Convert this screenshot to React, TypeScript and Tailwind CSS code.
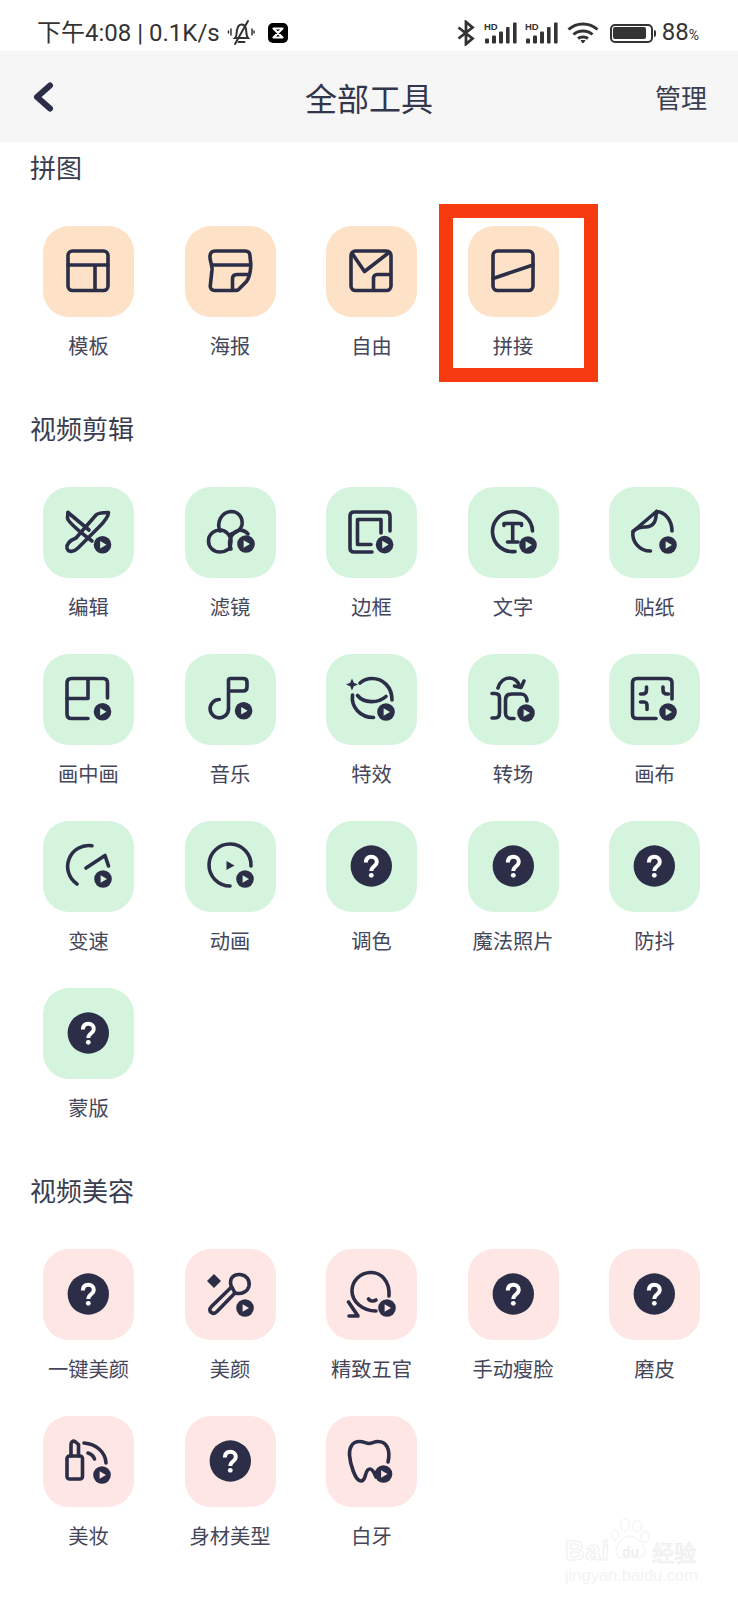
import React from "react";

const D = "#2c2e48";
const cjk = "font-['Noto_Sans_CJK_SC',sans-serif]";

function Play({ cx, cy, bg }: { cx: number; cy: number; bg: string }) {
  return (
    <g stroke="none">
      <circle cx={cx} cy={cy} r={8.8} fill={D} />
      <path d={`M${cx - 2.4} ${cy - 3.8} L${cx + 4} ${cy} L${cx - 2.4} ${cy + 3.8} Z`} fill={bg} />
    </g>
  );
}

type IconFn = (bg: string) => React.ReactNode;

const icons: Record<string, IconFn> = {
  template: () => (
    <>
      <rect x="25" y="25" width="40" height="39.500" rx="4.500" />
      <path d="M25 39H65M52 39V64" />
    </>
  ),
  poster: () => (
    <>
      <path d="M47 64.500H30C26.500 64.500 25 62.500 25.300 59.500L27 44C27.500 38 24.500 35 25 30C25.300 26.500 27 25 30 25H60C63 25 65 26.500 65 30C65 34 66.500 37 65.500 43C65 48 64 52 61.500 55.500L53 64C51.500 64.500 49 64.500 47 64.500" />
      <path d="M26.500 39H65" />
      <path d="M47.500 64V53C47.500 50 49 48.500 52 48.500H63" />
    </>
  ),
  free: () => (
    <>
      <rect x="25" y="25" width="40" height="39.500" rx="4.500" />
      <path d="M26.500 28L38.500 45.500L63 26.500" />
      <path d="M47.500 64V52C47.500 50 49 48.500 51 48.500H64.500" />
    </>
  ),
  splice: () => (
    <>
      <rect x="25" y="25" width="40" height="39.500" rx="4.500" />
      <path d="M25 52.500L65 39" />
    </>
  ),
  edit: (bg) => (
    <>
      <path d="M25 25.500L24.500 31C25 35 37 45 49 54" />
      <path d="M25 25.500L46 43" />
      <path d="M65.500 25.500C65.500 30 60 36 56 40L35 61C31 65 25 66 24 61C23.500 56 28 53 33 51L53 28C55 26 60 25.500 65.500 25.500" />
      <Play cx={59.500} cy={57.700} bg={bg} />
    </>
  ),
  filter: (bg) => (
    <>
      <path d="M35 44C31.500 36 36 25 46 24.500C54 24.500 58 31 57 38C56 42 52 46 46 47" />
      <path d="M36 43.500C30 42 23.500 47 23.500 54C23.500 60 28 65 35 65C38 65 41 64 44 62" />
      <path d="M35 43C41 43 46 49 46 54C46 58 45 60 44 62" />
      <path d="M46 62C43 56 45 49 50 45C54 42 60 43 63 47" />
      <Play cx={61} cy={57} bg={bg} />
    </>
  ),
  frame: (bg) => (
    <>
      <path d="M64 44V29C64 26.500 62.500 25 60 25H28C25.500 25 24 26.500 24 29V61C24 63.500 25.500 65 28 65H46" />
      <path d="M55 46V32.500H31.500V57.500H45" />
      <Play cx={58.600} cy={57.600} bg={bg} />
    </>
  ),
  text: (bg) => (
    <>
      <path d="M64.500 44A20 20 0 1 0 47 64.500" />
      <path d="M36 38.500V36.500H53.500V38.500M44.700 36.500V55M39.500 55H50" />
      <Play cx={60} cy={58} bg={bg} />
    </>
  ),
  sticker: (bg) => (
    <>
      <path d="M47.500 24.500C56 25 63 33 63 44" />
      <path d="M47.500 24.500L24 44.500C22.500 54 30 64 41.500 64" />
      <path d="M47.500 24.500C47 33 46 40 36 40C31 40 27.500 41 24 44.500" />
      <Play cx={59} cy={58} bg={bg} />
    </>
  ),
  pip: (bg) => (
    <>
      <path d="M64.500 44V29C64.500 26 63 24.500 60 24.500H28.500C25.500 24.500 24 26 24 29V60C24 63 25.500 64.500 28.500 64.500H45" />
      <path d="M24 44.500H45V24.500" />
      <Play cx={59.500} cy={57.700} bg={bg} />
    </>
  ),
  music: (bg) => (
    <>
      <path d="M43.500 55V26A2 2 0 0 1 45.500 24.500H58C60.500 24.500 62 26 62 28V33C62 35.500 60.500 37 58 37H43.500" />
      <path d="M43.500 55A9.200 9.200 0 1 1 34.300 45.500" />
      <Play cx={58.600} cy={56.700} bg={bg} />
    </>
  ),
  effect: (bg) => (
    <>
      <path d="M34 29C38 25.500 42 24.500 46 24.500C57 24.500 66 33 66 46" />
      <path d="M26.500 41C25 53 34 63.500 47.500 63.500" />
      <path d="M31.500 41.500C38 49.500 52 49.500 60 42.500" />
      <path d="M26 24.500L27.800 28.700L32 30.500L27.800 32.300L26 36.500L24.200 32.300L20 30.500L24.200 28.700Z" fill={D} stroke="none" />
      <Play cx={60} cy={58} bg={bg} />
    </>
  ),
  transition: (bg) => (
    <>
      <path d="M30 34C32 27 37 24 41.500 24C47 24 50 27 52 33" />
      <path d="M56 27L53 33.500L46.500 32" />
      <path d="M24 39.500H27C30 39.500 31.500 41 31.500 44V59C31.500 62 30 64 27 64H24" />
      <path d="M59 47C59 43 57 40 53 40H44C40 40 37.500 42 37.500 46V59C37.500 62 39.500 64.500 43 64.500H46" />
      <Play cx={58} cy={59} bg={bg} />
    </>
  ),
  canvas: (bg) => (
    <>
      <path d="M63 45V29C63 26 61.500 24.500 58.500 24.500H28C25 24.500 23.500 26 23.500 29V60C23.500 63 25 64.500 28 64.500H47" />
      <path d="M37.500 33V36C37.500 38.500 36 40 33.500 40H31.500M54 33V36C54 38.500 55.500 40 58 40H59.500M31.500 48H35C37 48 38 49.500 38 51V55.500" />
      <Play cx={59} cy={58} bg={bg} />
    </>
  ),
  speed: (bg) => (
    <>
      <path d="M49 24.800A21 21 0 0 0 34 63" />
      <path d="M43 47L62 34.500L65.500 45" />
      <Play cx={60} cy={58} bg={bg} />
    </>
  ),
  anim: (bg) => (
    <>
      <path d="M66 45A21 21 0 1 0 45 65" />
      <path d="M41.500 40L49.500 44.500L41.500 49Z" fill={D} stroke="none" />
      <Play cx={60} cy={58} bg={bg} />
    </>
  ),
  q: () => (
    <>
      <circle cx="45.300" cy="45" r="20.700" fill={D} stroke="none" />
      <path d="M39.800 41.500C40 37.500 42.300 35.800 45.300 35.800C48.500 35.800 50.800 38 50.800 41C50.800 45.500 45.300 45 45.300 50" stroke="#ffffff" strokeWidth="4" strokeLinecap="butt" />
      <circle cx="45.300" cy="54.300" r="2.400" fill="#ffffff" stroke="none" />
    </>
  ),
  beauty: (bg) => (
    <>
      <path d="M29 25L36 32L29 39L22 32Z" fill={D} stroke="none" />
      <path d="M46 36.500C44 29 49 25 55 25.500C61.500 26 65 31 64 37C63 42 57 46 50 44Z" />
      <path d="M46.500 38L26.500 57.500C24 60 24.500 62.500 26.500 63.500C28.500 65 30.500 64 32 62.500L50 44" />
      <Play cx={60} cy={59} bg={bg} />
    </>
  ),
  face: (bg) => (
    <>
      <path d="M63 47C64 32 55 23.500 45 23.500C34 23.500 26 32 26 42C26 52 36 62 50 62" />
      <path d="M22.500 53L32 67H23" />
      <path d="M42.500 50C44 52.500 48 52.500 50 51" />
      <Play cx={61} cy={59} bg={bg} />
    </>
  ),
  lipstick: (bg) => (
    <>
      <rect x="24" y="40" width="15.500" height="23" rx="2.500" />
      <path d="M28 40V28.500C28 26 30 24.500 32 25.500L35.500 28.500V40" />
      <path d="M41 27C53 28 62.500 36 63 47" />
      <path d="M45 37C48 38 50.500 40 51.500 43" />
      <Play cx={59} cy={59} bg={bg} />
    </>
  ),
  tooth: (bg) => (
    <>
      <path d="M62 46C65 33 60 25.500 52 25.500C48 25.500 46 27.500 43 27.500C40 27.500 38 25.500 33.500 25.500C26 25.500 23 32 23.500 39C24 47 29 65 35 65C41 65 38 53 44 53C47 53 48 57 50 61" />
      <Play cx={57.500} cy={58} bg={bg} />
    </>
  ),
};

function Tile({ icon, label, bg }: { icon: string; label: string; bg: string }) {
  return (
    <div className="flex flex-col items-center w-[91px]">
      <div className="w-[91px] h-[91px] rounded-[26px]" style={{ backgroundColor: bg }}>
        <svg viewBox="0 0 91 91" width="91" height="91" fill="none" stroke={D} strokeWidth="3.600" strokeLinecap="round" strokeLinejoin="round">
          {icons[icon](bg)}
        </svg>
      </div>
      <div className="mt-[15px] h-[28px] leading-[28px] text-[20.250px] text-[#44465a] whitespace-nowrap">{label}</div>
    </div>
  );
}

function Section({ title, bg, items, className }: { title: string; bg: string; items: [string, string][]; className?: string }) {
  return (
    <section className={className}>
      <h2 className="pl-[30px] h-[36px] leading-[33px] text-[26px] font-normal text-[#3a3c50]">{title}</h2>
      <div className="mt-[40px] pl-[43px] grid grid-cols-[repeat(5,91px)] gap-x-[50.500px] gap-y-[33px]">
        {items.map(([icon, label]) => (
          <Tile key={label} icon={icon} label={label} bg={bg} />
        ))}
      </div>
    </section>
  );
}

function Signal() {
  return (
    <svg width="33" height="22" viewBox="0 0 33 22" fill="#333">
      <text x="0" y="8" fontSize="9.500" fontWeight="700" fontFamily="Liberation Sans, sans-serif">HD</text>
      <rect x="1" y="16.500" width="4" height="5" rx="1" />
      <rect x="8" y="13.500" width="4" height="8" rx="1" />
      <rect x="15" y="9.500" width="4" height="12" rx="1" />
      <rect x="22" y="5" width="3.600" height="16.500" rx="1" />
      <rect x="29" y="0.500" width="3.600" height="21" rx="1" />
    </svg>
  );
}

function StatusBar() {
  return (
    <div className="h-[51px] bg-white relative flex items-center pl-[37px] pr-[39px] pt-[15px] text-[#333333] font-['Roboto','Noto_Sans_CJK_SC',sans-serif]">
      <span className="text-[24px] leading-[30px] whitespace-nowrap">下午4:08 | 0.1K/s</span>
      <svg className="ml-[7px]" width="28" height="28" viewBox="0 0 28 28" fill="none" stroke="#333" strokeWidth="2" strokeLinecap="round">
        <path d="M8 19C10 17 9.500 14 10 11C10.700 7.500 12 5.500 14.500 5.500C17 5.500 18.500 7.500 19 10C19.500 13 19 17 21 19Z" />
        <path d="M11.500 23H17.500" />
        <path d="M21 2L8 25" />
        <path d="M4 10V16M1.500 12V14M25 10V16M27 12V14" strokeWidth="1.500" />
      </svg>
      <svg className="ml-[13px]" width="20" height="20" viewBox="0 0 20 20">
        <rect width="20" height="20" rx="5" fill="#000" />
        <path d="M5.500 5.500H14.500L5.500 14.500H14.500Z" fill="none" stroke="#fff" strokeWidth="2.200" strokeLinejoin="round" />
      </svg>
      <div className="ml-auto flex items-center">
        <svg width="18" height="26" viewBox="0 0 17 26" fill="none" stroke="#333" strokeWidth="2.800">
          <path d="M1 7.500L15 18.500L8.500 24V2L15 7.500L1 18.500" />
        </svg>
        <div className="ml-[9px]"><Signal /></div>
        <div className="ml-[8px]"><Signal /></div>
        <svg className="ml-[9px]" width="32" height="22" viewBox="0 0 32 22" fill="none" stroke="#333" strokeWidth="3">
          <path d="M1.500 7.500C9.500 0 22.500 0 30.500 7.500" />
          <path d="M6.500 12.500C11.500 7.800 20.500 7.800 25.500 12.500" />
          <path d="M11 16.500C13.500 14.500 18.500 14.500 21 16.500" />
          <path d="M14 18.500L16 21L18 18.500Z" fill="#333" strokeWidth="1" />
        </svg>
        <div className="ml-[11px] flex items-center">
          <div className="w-[43px] h-[19px] rounded-[5px] border-[2.500px] border-[#333] p-[1.500px]">
            <div className="h-full w-[92%] rounded-[2px] bg-[#333]" />
          </div>
          <div className="w-[2px] h-[7px] bg-[#333] rounded-r-sm ml-[1px]" />
        </div>
        <span className="ml-[6px] text-[24px] leading-[30px] whitespace-nowrap">88<span className="text-[14px]">%</span></span>
      </div>
    </div>
  );
}

function Header() {
  return (
    <div className="h-[91px] bg-[#f6f6f6] flex items-center justify-between pl-[33px] pr-[31px] relative">
      <svg width="21" height="30" viewBox="0 0 21 30" fill="none" stroke={D} strokeWidth="6" strokeLinecap="round" strokeLinejoin="round">
        <path d="M17 3.500L4 15L17 26.500" />
      </svg>
      <h1 className="absolute left-0 right-0 text-center text-[32px] leading-[46px] font-normal text-[#33354a]">全部工具</h1>
      <span className="text-[26px] leading-[36px] text-[#3a3c50]">管理</span>
    </div>
  );
}

function Watermark() {
  return (
    <div className="absolute left-[565px] top-[1518px] w-[134px] h-[66px] pointer-events-none font-['Liberation_Sans',sans-serif]">
      <svg className="absolute left-[46px] top-0" width="40" height="42" viewBox="0 0 40 42" fill="none" stroke="#f1f1f1" strokeWidth="1">
        <ellipse cx="4" cy="17" rx="3.500" ry="5" />
        <ellipse cx="14" cy="7" rx="4.500" ry="6" />
        <ellipse cx="26" cy="8" rx="4.500" ry="6" />
        <ellipse cx="34" cy="19" rx="4" ry="5.500" />
        <path d="M19 18C12 18 5 27 5 34C5 40 12 41 19 39C26 41 34 40 34 34C34 27 26 18 19 18Z" />
      </svg>
      <span className="absolute left-0 top-[18px] text-[27px] leading-[30px] font-bold text-white [-webkit-text-stroke:1px_#efefef] tracking-[1px]">Bai</span>
      <span className="absolute left-[57px] top-[27px] text-[14px] leading-[14px] text-[#efefef] font-bold">du</span>
      <span className="absolute left-[87px] top-[20px] text-[22px] leading-[26px] text-white [-webkit-text-stroke:1px_#efefef] font-['Noto_Sans_CJK_SC',sans-serif]">经验</span>
      <span className="absolute left-0 top-[48px] text-[16.500px] leading-[18px] text-[#f3f3f3] whitespace-nowrap">jingyan.baidu.com</span>
    </div>
  );
}

export default function App() {
  return (
    <div className={`relative w-[738px] h-[1600px] bg-white overflow-hidden ${cjk}`}>
      <StatusBar />
      <Header />
      <Section
        className="pt-[8px]"
        title="拼图"
        bg="#fde2c8"
        items={[["template", "模板"], ["poster", "海报"], ["free", "自由"], ["splice", "拼接"]]}
      />
      <Section
        className="mt-[51px]"
        title="视频剪辑"
        bg="#d5f4de"
        items={[
          ["edit", "编辑"], ["filter", "滤镜"], ["frame", "边框"], ["text", "文字"], ["sticker", "贴纸"],
          ["pip", "画中画"], ["music", "音乐"], ["effect", "特效"], ["transition", "转场"], ["canvas", "画布"],
          ["speed", "变速"], ["anim", "动画"], ["q", "调色"], ["q", "魔法照片"], ["q", "防抖"],
          ["q", "蒙版"],
        ]}
      />
      <Section
        className="mt-[51px]"
        title="视频美容"
        bg="#fde6e4"
        items={[
          ["q", "一键美颜"], ["beauty", "美颜"], ["face", "精致五官"], ["q", "手动瘦脸"], ["q", "磨皮"],
          ["lipstick", "美妆"], ["q", "身材美型"], ["tooth", "白牙"],
        ]}
      />
      <div className="absolute left-[439px] top-[204px] w-[159px] h-[178px] border-[14px] border-[#f83a10]" />
      <Watermark />
    </div>
  );
}
